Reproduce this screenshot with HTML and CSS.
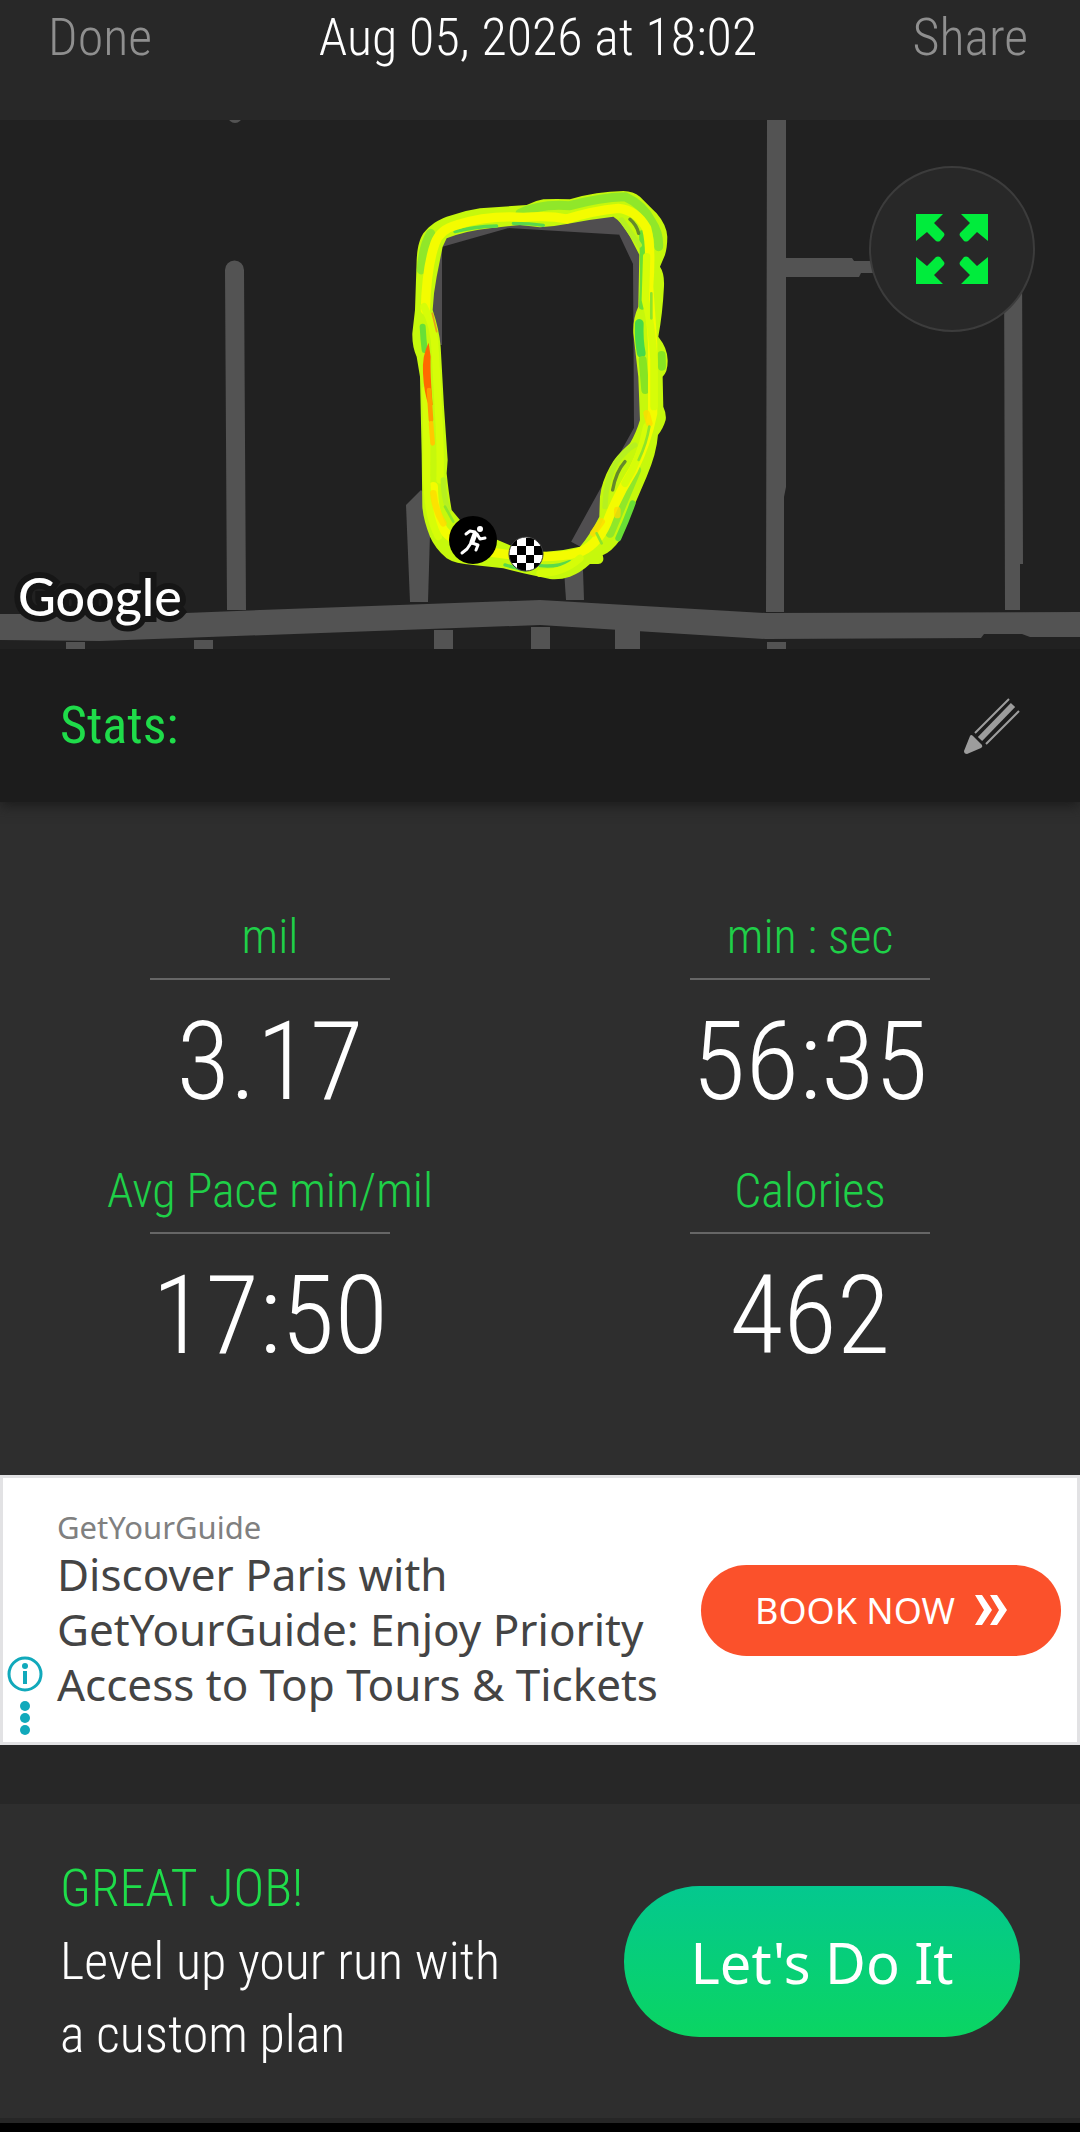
FILE: index.html
```
<!DOCTYPE html>
<html lang="en">
<head>
  <meta charset="UTF-8" />
  <meta name="viewport" content="width=device-width, initial-scale=1.0"/>
  <title>Run Summary</title>
  <link rel="stylesheet" href="styles.css">
</head>
<body>

  <!-- Top bar -->
  <header class="top-bar">
    <button type="button" class="bar-btn">Done</button>
    <h1>Aug 05, 2026 at 18:02</h1>
    <button type="button" class="bar-btn">Share</button>
  </header>

  <main>
    <!-- Route map -->
    <section class="map">
      <svg class="map-canvas" viewBox="0 120 1080 529" role="img" aria-label="Route map">
        <g fill="#535353">
          <circle cx="235" cy="116" r="7"/>
          <path d="M225 270a9 9 0 0 1 19 0l2 340h-19z"/>
          <path d="M767 120h19v138h66l2 3h20v12h-13l-2 4h-73v210l-2 10v115h-18z"/>
          <path d="M1004 250h18l1 314h-3v46h-15z"/>
          <path d="M406 505l15-15 10 10-3 102h-18z"/>
          <path d="M564 570h19l1 30h-18z"/>
          <path d="M0 614h160l100-4 280-10 226 13 314-1v25h-50l-8-3h-38l-3 4-215 1-226-14-440 16-100-1z"/>
          <path d="M66 642h19v7h-19zM194 640h19v9h-19zM434 630h19v19h-19zM531 627h19v22h-19zM615 629h25v20h-25zM767 642h19v7h-19z"/>
        </g>
        <path d="M433 345V240l74-21 118 7 17 36 1 168-64 116" fill="none" stroke="#504e50" stroke-width="18"/>

        <!-- Recorded track -->
        <g transform="translate(380 160) scale(.3333)" fill="none" stroke-linecap="round" stroke-linejoin="round">
          <path fill="#c6f80c" fill-rule="evenodd" d="M110 300C112 262 118 240 130 220C152 192 175 180 200 170Q250 152 300 145L440 135Q465 122 490 118Q530 116 570 118Q610 106 650 100Q690 94 730 93Q760 94 780 110Q810 140 830 160Q860 195 862 230Q862 262 855 285L840 320Q854 340 852 380Q848 460 835 530Q863 565 863 600Q864 636 848 650L850 740Q860 762 857 780Q850 805 834 825Q830 880 800 950L740 1090L720 1140Q695 1175 668 1186Q676 1208 655 1212L630 1212Q602 1238 570 1250Q540 1260 510 1257L430 1240L370 1225L280 1215Q225 1212 200 1195Q165 1165 150 1130Q130 1080 127 1040L125 880L120 650L110 590Q96 560 97 520L105 450Z
            M188 260L200 235Q260 212 330 205L420 195L480 202Q520 200 560 192Q630 178 700 170Q725 185 750 230L778 284L775 440Q758 475 760 520L775 650L780 780Q768 820 750 850Q705 890 690 920Q665 965 660 1010L658 1070Q630 1125 600 1160Q550 1172 500 1175Q450 1175 400 1160Q300 1120 240 1080L215 1050Q206 1000 200 940L203 900L192 740L182 560Q178 510 158 450Q160 400 170 350Z"/>
          <path stroke="#90e72a" stroke-width="27" d="M420 160Q480 130 570 137Q660 112 735 110Q790 135 815 185Q838 220 836 260M124 330Q128 260 152 220M690 1120L770 930"/>
          <path stroke="#68df36" stroke-width="18" d="M786 220Q792 330 786 440M128 500Q130 540 134 570M715 1135Q740 1080 758 1030"/>
          <path stroke="#49d948" stroke-width="26" d="M778 490Q776 540 784 580"/>
          <path stroke="#87e423" stroke-width="24" d="M788 600L796 690M845 585L846 620"/>
          <path stroke="#59d94b" stroke-width="10" d="M400 190Q450 190 490 196M225 215Q280 200 350 198M375 1215Q410 1225 435 1230M480 1217Q530 1222 570 1205"/>
          <path stroke="#f4fc00" stroke-width="28" d="M136 450Q140 320 165 250Q180 208 230 195Q320 165 430 172Q510 166 560 177Q640 152 715 145Q770 150 800 205Q815 260 806 380Q812 470 818 550Q818 660 818 760Q800 850 760 930Q710 1010 680 1090Q650 1160 590 1180Q500 1200 360 1180Q240 1170 190 1110Q160 1060 160 980"/>
          <path stroke="#d6fd08" stroke-width="22" d="M132 440Q165 500 166 580L178 800Q182 880 180 960M137 690Q142 800 140 920Q138 1060 175 1130M800 290L796 420Q815 490 822 600V740M800 800Q780 900 735 970M600 1195Q550 1240 480 1240"/>
          <path stroke="#b6f020" stroke-width="16" d="M675 1040Q676 960 710 905Q740 868 765 855M725 180L778 255M190 960Q190 1010 205 1050"/>
          <path stroke="#ffd900" stroke-width="20" d="M160 1000Q165 1050 190 1090M800 760L808 790M665 1085L640 1120M712 1050V1065" opacity=".75"/>
          <path fill="#ff6a00" d="M146 548Q126 585 129 640Q132 700 146 735H158Q150 640 152 590Z"/>
          <path stroke="#ff9b00" stroke-width="14" d="M147 690L153 780"/>
          <path stroke="#ffc800" stroke-width="14" d="M153 790L158 850"/>
          <path stroke="#e69a20" stroke-width="5" d="M157 460L170 515"/>
          <path stroke="#65892b" stroke-width="10" d="M735 905Q708 935 698 990M750 178Q770 195 776 220"/>
          <path stroke="#8ee52a" stroke-width="8" d="M808 800Q800 850 776 900M814 400V475M650 1120L665 1150M195 1040L220 1085"/>
        </g>

        <!-- Start marker -->
        <circle cx="473" cy="540" r="24"/>
        <g fill="none" stroke="#fff" stroke-linecap="round" stroke-linejoin="round">
          <path stroke-width="5" d="M475 534l-3 8"/>
          <path stroke-width="3" d="M475 532l-5-1-4 3M477 534l3 5 5-1M472 543l6 2-2 5M471 543l-4 6-5 4"/>
        </g>
        <circle cx="480" cy="529" r="3" fill="#fff"/>

        <!-- Finish marker -->
        <clipPath id="flag"><circle cx="526" cy="554" r="17"/></clipPath>
        <g clip-path="url(#flag)">
          <path fill="#fff" d="M509 537h34v34h-34z"/>
          <path d="M509 538h8v8h-8zM526 538h8v8h-8zM517 546h9v9h-9zM534 546h9v9h-9zM509 555h8v8h-8zM526 555h8v8h-8zM517 563h9v9h-9zM534 563h9v9h-9z"/>
        </g>
        <circle cx="526" cy="554" r="17" fill="none" stroke="#333"/>
      </svg>
      <span class="map-brand">Google</span>
      <button type="button" class="expand-btn" aria-label="Expand map">
        <svg viewBox="0 0 72 72" fill="#00ec3c">
          <path id="arrow" d="M0 1H27L18 10 28 20Q29 22 28 23L24 28Q22 29 20 28L11 19 0 28Z"/>
          <use href="#arrow" transform="matrix(-1 0 0 1 72 0)"/>
          <use href="#arrow" transform="matrix(1 0 0 -1 0 72)"/>
          <use href="#arrow" transform="matrix(-1 0 0 -1 72 72)"/>
        </svg>
      </button>
    </section>

    <!-- Stats -->
    <section class="stats">
      <div class="stats-head">
        <h2>Stats:</h2>
        <button type="button" class="edit-btn" aria-label="Edit stats">
          <svg viewBox="0 0 56 56">
            <path fill="#9d9d9d" d="M6 38Q7 36 9 38L18 47Q19 49 17 50L3 56Q0 56 0 53Z"/>
            <path fill="none" stroke="#9d9d9d" stroke-width="6" d="M16 41L49 7"/>
            <path fill="none" stroke="#9d9d9d" stroke-width="2" d="M11 35L45 1M22 46L55 13"/>
          </svg>
        </button>
      </div>
      <dl class="stats-grid">
        <div class="stat">
          <dt>mil</dt>
          <dd>3.17</dd>
        </div>
        <div class="stat">
          <dt>min : sec</dt>
          <dd>56:35</dd>
        </div>
        <div class="stat">
          <dt>Avg Pace min/mil</dt>
          <dd>17:50</dd>
        </div>
        <div class="stat">
          <dt>Calories</dt>
          <dd>462</dd>
        </div>
      </dl>
    </section>

    <!-- Sponsored banner -->
    <aside class="ad">
      <div class="ad-controls">
        <button type="button" aria-label="Ad info">
          <svg width="36" height="36" viewBox="0 0 36 36">
            <circle cx="18" cy="18" r="16" fill="none" stroke="#11a9bb" stroke-width="3"/>
            <circle cx="18" cy="10" r="3" fill="#11a9bb"/>
            <path fill="#11a9bb" d="M16 15h4v13h-4z"/>
          </svg>
        </button>
        <button type="button" aria-label="Ad options">
          <svg width="36" height="36" viewBox="0 0 36 36" fill="#11a9bb">
            <circle cx="18" cy="6" r="5"/>
            <circle cx="18" cy="18" r="5"/>
            <circle cx="18" cy="30" r="5"/>
          </svg>
        </button>
      </div>
      <div class="ad-text">
        <p class="ad-brand">GetYourGuide</p>
        <p class="ad-title">Discover Paris with GetYourGuide: Enjoy Priority Access to Top Tours &amp; Tickets</p>
      </div>
      <a class="ad-link" href="#">
        BOOK NOW
        <svg width="32" height="30" viewBox="0 0 32 30" fill="#fff">
          <path d="M0 0h7l10 15L7 30H0l9-15zM15 0h7l10 15-10 15h-7l9-15z"/>
        </svg>
      </a>
    </aside>

    <!-- Plan promo -->
    <section class="promo">
      <div class="promo-text">
        <h2>GREAT JOB!</h2>
        <p>Level up your run with a custom plan</p>
      </div>
      <button type="button" class="promo-btn">Let's Do It</button>
    </section>
  </main>

</body>
</html>
```
FILE: styles.css
```
* {
  box-sizing: border-box;
}

body {
  margin: 0;
  background: #000;
  color: #fff;
  font-family: "Roboto Condensed", Roboto, sans-serif;
  font-weight: 300;
}

h1,
h2,
p,
dl,
dd {
  margin: 0;
  font-weight: inherit;
}

button {
  padding: 0;
  border: none;
  background: none;
  font: inherit;
  cursor: pointer;
}

svg {
  display: block;
}

.top-bar {
  display: grid;
  grid-template-columns: 1fr auto 1fr;
  align-items: start;
  height: 120px;
  padding: 4px 52px 0 48px;
  background: #282828;
  font-size: 52px;
  line-height: 68px;
}

.top-bar h1 {
  font-size: 52px;
}

.bar-btn {
  justify-self: start;
  color: #8f8f8f;
}

.bar-btn:last-child {
  justify-self: end;
}

/* Map */
.map {
  position: relative;
  background: #212121;
}

.map-canvas {
  width: 100%;
  height: auto;
}

.map-brand {
  position: absolute;
  left: 18px;
  bottom: 17px;
  font-family: Lato, sans-serif;
  font-size: 52px;
  font-weight: 500;
  line-height: 72px;
  -webkit-text-stroke: 12px #161616;
  paint-order: stroke fill;
}

.expand-btn {
  position: absolute;
  top: 46px;
  right: 45px;
  display: flex;
  justify-content: center;
  align-items: center;
  width: 166px;
  height: 166px;
  border: 2px solid #3c3c3c;
  border-radius: 50%;
  background: #282828;
}

.expand-btn svg {
  width: 72px;
  height: 72px;
}

/* Stats */
.stats {
  background: #2e2e2e;
}

.stats-head {
  display: flex;
  justify-content: space-between;
  align-items: center;
  height: 153px;
  padding: 0 60px;
  background: #1c1c1c;
  box-shadow: 0 4px 12px #1c1c1c;
}

.stats-head h2 {
  color: #1fdc4a;
  font-size: 52px;
  font-weight: 400;
}

.edit-btn svg {
  width: 56px;
  height: 56px;
}

.stats-grid {
  display: grid;
  grid-template-columns: 1fr 1fr;
  padding: 98px 0 67px;
}

.stat {
  display: flex;
  flex-direction: column;
  align-items: center;
  height: 254px;
}

.stat dt {
  padding-bottom: 4px;
  color: #1fd048;
  font-size: 48px;
  line-height: 74px;
}

.stat dd {
  width: 240px;
  padding-top: 18px;
  border-top: 2px solid #666;
  font-size: 110px;
  line-height: 128px;
  text-align: center;
}

/* Ad */
.ad {
  display: flex;
  align-items: center;
  height: 270px;
  padding-right: 16px;
  border: 3px solid #e2e2e4;
  background: #fff;
  color: #444;
  font-family: "Noto Sans", sans-serif;
  font-weight: 400;
}

.ad-controls {
  display: flex;
  flex-direction: column;
  align-self: flex-end;
  gap: 8px;
  padding: 0 14px 6px 4px;
}

.ad-text {
  flex: 1;
}

.ad-brand {
  padding-bottom: 2px;
  color: #808080;
  font-size: 31px;
  line-height: 36px;
}

.ad-title {
  max-width: 620px;
  font-size: 44px;
  line-height: 55px;
}

.ad-link {
  display: flex;
  justify-content: center;
  align-items: center;
  gap: 20px;
  width: 360px;
  height: 91px;
  border-radius: 46px;
  background: #fb512b;
  color: #fff;
  font-size: 36px;
  text-decoration: none;
}

/* Promo */
.promo {
  display: flex;
  justify-content: space-between;
  align-items: center;
  padding: 48px 60px 47px;
  border-top: 59px solid #272727;
  border-bottom: 5px solid #262626;
  background: #2e2e2e;
}

.promo-text {
  max-width: 460px;
  font-size: 52px;
  line-height: 73px;
}

.promo-text h2 {
  color: #1fdc4a;
  font-size: 52px;
}

.promo-btn {
  width: 396px;
  height: 151px;
  border-radius: 76px;
  background: linear-gradient(#04c88f, #0ad562);
  color: #fff;
  font-family: "Noto Sans", sans-serif;
  font-size: 56px;
  font-weight: 400;
}
```
